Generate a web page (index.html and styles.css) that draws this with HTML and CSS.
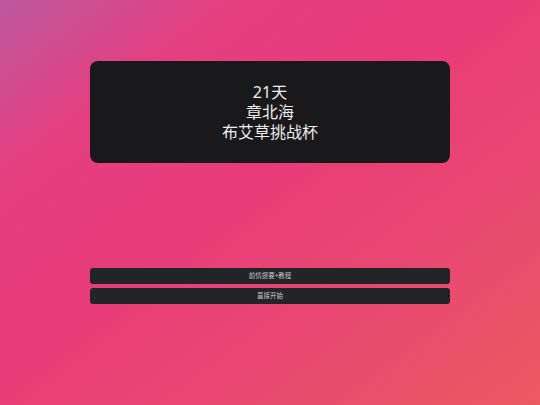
FILE: index.html
```html
<!DOCTYPE html>
<html lang="zh">
<head>
<meta charset="utf-8">
<link rel="stylesheet" href="styles.css">
</head>
<body>
<div class="page">
  <div class="card">
    <div class="title">21天</div>
    <div class="title">章北海</div>
    <div class="title">布艾草挑战杯</div>
  </div>
  <div class="buttons">
    <div class="btn">前情提要+教程</div>
    <div class="btn">直接开始</div>
  </div>
</div>
</body>
</html>
```
FILE: styles.css
```css
html, body {
  margin: 0;
  padding: 0;
  width: 540px;
  height: 405px;
  overflow: hidden;
}
body {
  background: linear-gradient(to bottom right, #bc589e 0%, #e43f80 22%, #e83c79 45%, #e94a6f 75%, #eb5a60 100%);
  font-family: "Noto Sans", "Noto Sans CJK SC", sans-serif;
}
.page {
  display: flex;
  flex-direction: column;
  align-items: center;
  padding-top: 61px;
}
.card {
  width: 360px;
  height: 102px;
  box-sizing: border-box;
  background: #19191b;
  border-radius: 8px;
  display: flex;
  flex-direction: column;
  align-items: center;
  justify-content: center;
  color: #ededed;
  padding-top: 0;
}
.title {
  font-size: 16px;
  line-height: 20px;
}
.buttons {
  margin-top: 105px;
  display: flex;
  flex-direction: column;
  gap: 4px;
  width: 360px;
}
.btn {
  height: 16px;
  background: #222427;
  border-radius: 3px;
  color: #c8c8c8;
  font-size: 6.5px;
  line-height: 16px;
  text-align: center;
}
```
